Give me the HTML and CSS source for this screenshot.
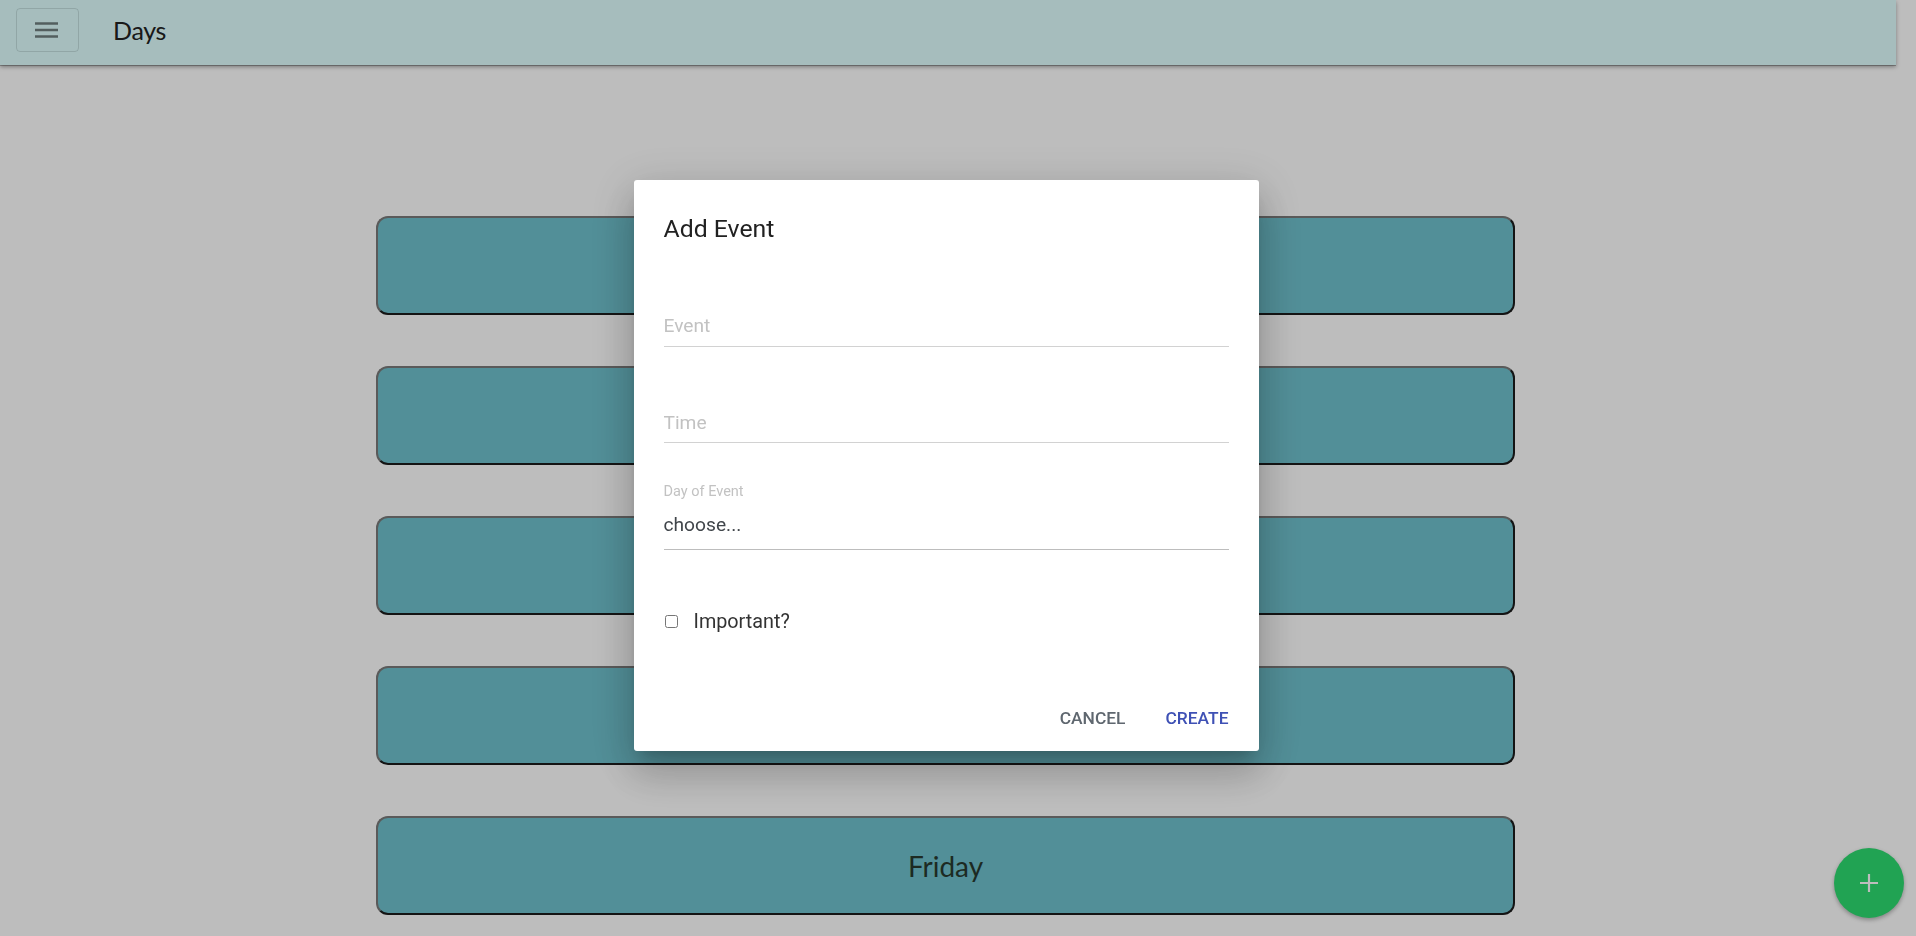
FILE: index.html
```html
<!DOCTYPE html>
<html lang="en">
<head>
<meta charset="utf-8">
<title>Days</title>
<link rel="stylesheet" href="styles.css">
</head>
<body>
<header class="topbar">
  <button class="menu-btn" type="button" aria-label="Menu">
    <svg width="24" height="18" viewBox="0 0 24 18"><path d="M0 2.5h23M0 9h23M0 15.5h23" stroke="rgba(0,0,0,0.5)" stroke-width="2.4" fill="none"/></svg>
  </button>
  <span class="brand">Days</span>
</header>

<main class="days">
  <div class="day-card">Monday</div>
  <div class="day-card">Tuesday</div>
  <div class="day-card">Wednesday</div>
  <div class="day-card">Thursday</div>
  <div class="day-card">Friday</div>
</main>

<button class="fab" type="button" aria-label="Add">
  <svg width="18" height="18" viewBox="0 0 18 18"><path d="M9 0v18M0 9h18" stroke="#fff" stroke-width="2.2"/></svg>
</button>

<div class="backdrop">
  <div class="dialog">
    <h2 class="dialog-title">Add Event</h2>
    <div class="field field-event">
      <input type="text" placeholder="Event">
    </div>
    <div class="field field-time">
      <input type="text" placeholder="Time">
    </div>
    <div class="field field-day">
      <label class="small-label">Day of Event</label>
      <div class="select">choose...</div>
    </div>
    <label class="check-row">
      <input type="checkbox">
      <span>Important?</span>
    </label>
    <div class="actions">
      <button class="btn btn-cancel" type="button">CANCEL</button>
      <button class="btn btn-create" type="button">CREATE</button>
    </div>
  </div>
</div>
</body>
</html>
```

FILE: styles.css
```css
html, body {
  margin: 0;
  padding: 0;
  height: 100%;
  overflow: hidden;
}
body {
  background: #ffffff;
  font-family: Lato, "Open Sans", sans-serif;
}

.topbar {
  height: 65px;
  margin-right: 20px;
  background: #e0ffff;
  box-shadow: 0 1px 0 rgba(0,0,0,0.25), 0 2px 4px rgba(0,0,0,0.35);
  display: flex;
  align-items: center;
  padding-left: 16px;
  box-sizing: border-box;
  position: relative;
  z-index: 1;
}
.menu-btn {
  width: 63px;
  height: 44px;
  margin-top: -5px;
  border: 1px solid rgba(0,0,0,0.12);
  border-radius: 4px;
  background: transparent;
  display: flex;
  align-items: center;
  justify-content: center;
  padding: 0;
  padding-right: 1px;
}
.brand {
  margin-left: 34px;
  font-size: 25px;
  color: #222;
  margin-top: -6px;
  letter-spacing: -0.3px;
}

.days {
  margin-right: 25px;
  padding-top: 151px;
  display: flex;
  flex-direction: column;
  align-items: center;
  gap: 51px;
}
.day-card {
  width: 1139px;
  height: 99px;
  box-sizing: border-box;
  background: #6fc1cd;
  border: 2px solid;
  border-color: #7a7a7a #1c1c1c #1c1c1c #7a7a7a;
  border-radius: 12px;
  display: flex;
  align-items: center;
  justify-content: center;
  font-size: 28px;
  color: #28392f;
  flex-shrink: 0;
}

.fab {
  position: fixed;
  right: 12px;
  bottom: 18px;
  width: 70px;
  height: 70px;
  border-radius: 50%;
  border: none;
  background: #2ddc70;
  box-shadow: 0 2px 4px rgba(0,0,0,0.3);
  display: flex;
  align-items: center;
  justify-content: center;
  padding: 0;
}

.backdrop {
  position: fixed;
  inset: 0;
  background: rgba(0,0,0,0.26);
  display: flex;
  align-items: center;
  justify-content: center;
  padding-right: 24px;
  padding-bottom: 5px;
  z-index: 10;
}
.dialog {
  width: 625px;
  height: 571px;
  box-sizing: border-box;
  background: #fff;
  border-radius: 3px;
  padding: 33px 30px 0;
  box-shadow: 0 11px 15px -7px rgba(0,0,0,0.2), 0 24px 38px 3px rgba(0,0,0,0.14), 0 9px 46px 8px rgba(0,0,0,0.12);
  font-family: Roboto, "Liberation Sans", sans-serif;
  display: flex;
  flex-direction: column;
}
.dialog-title {
  margin: 0;
  font-size: 24.8px;
  font-weight: 400;
  line-height: 32px;
  color: #212121;
}
.field input {
  display: block;
  width: 100%;
  box-sizing: border-box;
  height: 36px;
  border: none;
  border-bottom: 1px solid #d2d2d2;
  padding: 0 0 7px;
  font-family: Roboto, sans-serif;
  font-size: 19.2px;
  line-height: 28px;
  color: #333;
  outline: none;
  background: transparent;
}
.field input::placeholder {
  color: #c2c2c2;
}
.field-event { margin-top: 66px; }
.field-time { margin-top: 61px; }
.field-time input { height: 35px; padding-bottom: 6px; }
.field-day { margin-top: 40px; }
.small-label {
  display: block;
  font-size: 14.5px;
  line-height: 18px;
  color: #c2c2c2;
}
.select {
  margin-top: 10px;
  height: 39px;
  box-sizing: border-box;
  font-size: 19.2px;
  line-height: 28px;
  color: #40454a;
  border-bottom: 1px solid #bdbdbd;
}
.check-row {
  margin-top: 57px;
  display: flex;
  align-items: center;
  height: 28px;
  font-size: 19.8px;
  color: #333;
}
.check-row input {
  width: 13px;
  height: 13px;
  margin: 0 0 0 1px;
}
.check-row span {
  margin-left: 16px;
}
.actions {
  margin-top: 71px;
  display: flex;
  justify-content: flex-end;
  gap: 40px;
}
.btn {
  border: none;
  background: transparent;
  padding: 0;
  font-family: Roboto, sans-serif;
  font-weight: 500;
  font-size: 17.4px;
  line-height: 24px;
}
.btn-cancel { color: #5f676f; }
.btn-create { color: #3f51b5; }
```
